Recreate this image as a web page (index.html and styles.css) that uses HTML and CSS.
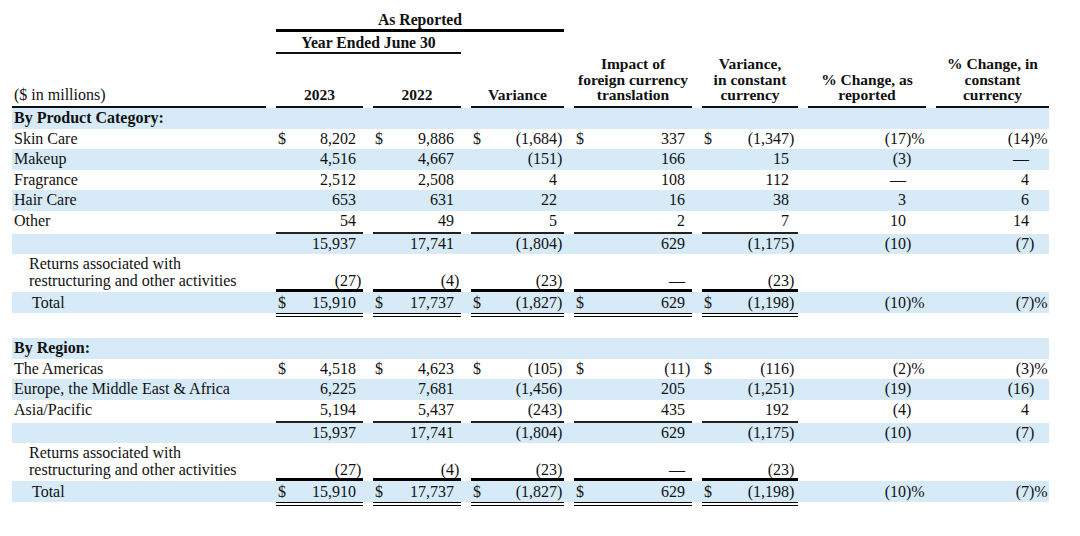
FILE: index.html
```html
<!DOCTYPE html>
<html>
<head>
<meta charset="utf-8">
<link rel="stylesheet" href="styles.css">
</head>
<body>
<div class="sheet">
  <div class="row">
    <div class="t1">As Reported</div>
  </div>
  <div class="row">
    <div class="t2">Year Ended June 30</div>
  </div>
  <div class="row heads">
    <div class="hl">($ in millions)</div>
    <div class="hd">2023</div>
    <div class="hd">2022</div>
    <div class="hd">Variance</div>
    <div class="hd">Impact of<br>foreign currency<br>translation</div>
    <div class="hd">Variance,<br>in constant<br>currency</div>
    <div class="hd">% Change, as<br>reported</div>
    <div class="hd">% Change, in<br>constant<br>currency</div>
  </div>

  <div class="row r blue cat"><div class="lab">By Product Category:</div></div>
  <div class="row r">
    <div class="lab">Skin Care</div>
    <div class="n"><span class="d">$</span>8,202</div>
    <div class="n"><span class="d">$</span>9,886</div>
    <div class="n"><span class="d">$</span>(1,684<span class="h">)</span></div>
    <div class="n"><span class="d">$</span>337</div>
    <div class="n c5"><span class="d">$</span>(1,347<span class="h">)</span></div>
    <div class="p">(17<span class="h">)%</span></div>
    <div class="p">(14<span class="h">)%</span></div>
  </div>
  <div class="row r blue">
    <div class="lab">Makeup</div>
    <div class="n">4,516</div>
    <div class="n">4,667</div>
    <div class="n">(151<span class="h">)</span></div>
    <div class="n">166</div>
    <div class="n c5">15</div>
    <div class="p">(3<span class="h">)</span></div>
    <div class="p">—</div>
  </div>
  <div class="row r">
    <div class="lab">Fragrance</div>
    <div class="n">2,512</div>
    <div class="n">2,508</div>
    <div class="n">4</div>
    <div class="n">108</div>
    <div class="n c5">112</div>
    <div class="p">—</div>
    <div class="p">4</div>
  </div>
  <div class="row r blue">
    <div class="lab">Hair Care</div>
    <div class="n">653</div>
    <div class="n">631</div>
    <div class="n">22</div>
    <div class="n">16</div>
    <div class="n c5">38</div>
    <div class="p">3</div>
    <div class="p">6</div>
  </div>
  <div class="row r">
    <div class="lab">Other</div>
    <div class="n ul">54</div>
    <div class="n ul">49</div>
    <div class="n ul">5</div>
    <div class="n ul">2</div>
    <div class="n c5 ul">7</div>
    <div class="p">10</div>
    <div class="p">14</div>
  </div>
  <div class="row r blue">
    <div class="lab"></div>
    <div class="n">15,937</div>
    <div class="n">17,741</div>
    <div class="n">(1,804<span class="h">)</span></div>
    <div class="n">629</div>
    <div class="n c5">(1,175<span class="h">)</span></div>
    <div class="p">(10<span class="h">)</span></div>
    <div class="p">(7<span class="h">)</span></div>
  </div>
  <div class="row ret">
    <div class="lab">Returns associated with<br>restructuring and other activities</div>
    <div class="n">(27<span class="h">)</span></div>
    <div class="n">(4<span class="h">)</span></div>
    <div class="n">(23<span class="h">)</span></div>
    <div class="n">—</div>
    <div class="n c5">(23<span class="h">)</span></div>
    <div></div>
    <div></div>
  </div>
  <div class="row tot">
    <div class="lab">Total</div>
    <div class="n"><span class="d">$</span>15,910</div>
    <div class="n"><span class="d">$</span>17,737</div>
    <div class="n"><span class="d">$</span>(1,827<span class="h">)</span></div>
    <div class="n"><span class="d">$</span>629</div>
    <div class="n c5"><span class="d">$</span>(1,198<span class="h">)</span></div>
    <div class="p">(10<span class="h">)%</span></div>
    <div class="p">(7<span class="h">)%</span></div>
  </div>

  <div class="row r blue cat gap"><div class="lab">By Region:</div></div>
  <div class="row r">
    <div class="lab">The Americas</div>
    <div class="n"><span class="d">$</span>4,518</div>
    <div class="n"><span class="d">$</span>4,623</div>
    <div class="n"><span class="d">$</span>(105<span class="h">)</span></div>
    <div class="n"><span class="d">$</span>(11<span class="h">)</span></div>
    <div class="n c5"><span class="d">$</span>(116<span class="h">)</span></div>
    <div class="p">(2<span class="h">)%</span></div>
    <div class="p">(3<span class="h">)%</span></div>
  </div>
  <div class="row r blue">
    <div class="lab">Europe, the Middle East &amp; Africa</div>
    <div class="n">6,225</div>
    <div class="n">7,681</div>
    <div class="n">(1,456<span class="h">)</span></div>
    <div class="n">205</div>
    <div class="n c5">(1,251<span class="h">)</span></div>
    <div class="p">(19<span class="h">)</span></div>
    <div class="p">(16<span class="h">)</span></div>
  </div>
  <div class="row r">
    <div class="lab">Asia/Pacific</div>
    <div class="n ul">5,194</div>
    <div class="n ul">5,437</div>
    <div class="n ul">(243<span class="h">)</span></div>
    <div class="n ul">435</div>
    <div class="n c5 ul">192</div>
    <div class="p">(4<span class="h">)</span></div>
    <div class="p">4</div>
  </div>
  <div class="row r blue">
    <div class="lab"></div>
    <div class="n">15,937</div>
    <div class="n">17,741</div>
    <div class="n">(1,804<span class="h">)</span></div>
    <div class="n">629</div>
    <div class="n c5">(1,175<span class="h">)</span></div>
    <div class="p">(10<span class="h">)</span></div>
    <div class="p">(7<span class="h">)</span></div>
  </div>
  <div class="row ret">
    <div class="lab">Returns associated with<br>restructuring and other activities</div>
    <div class="n">(27<span class="h">)</span></div>
    <div class="n">(4<span class="h">)</span></div>
    <div class="n">(23<span class="h">)</span></div>
    <div class="n">—</div>
    <div class="n c5">(23<span class="h">)</span></div>
    <div></div>
    <div></div>
  </div>
  <div class="row tot">
    <div class="lab">Total</div>
    <div class="n"><span class="d">$</span>15,910</div>
    <div class="n"><span class="d">$</span>17,737</div>
    <div class="n"><span class="d">$</span>(1,827<span class="h">)</span></div>
    <div class="n"><span class="d">$</span>629</div>
    <div class="n c5"><span class="d">$</span>(1,198<span class="h">)</span></div>
    <div class="p">(10<span class="h">)%</span></div>
    <div class="p">(7<span class="h">)%</span></div>
  </div>
</div>
</body>
</html>
```

FILE: styles.css
```css
* {
  box-sizing: border-box;
  margin: 0;
  padding: 0;
}

body {
  margin: 0;
  background: #ffffff;
  color: #111111;
  font-family: "Liberation Serif", "Times New Roman", serif;
  font-size: 16px;
}

.sheet {
  padding: 11px 0 0 12px;
  width: 1049px;
}

.row {
  display: grid;
  grid-template-columns: 254px 87px 88px 93px 118px 96px 118px 113px;
  column-gap: 10px;
  white-space: nowrap;
}

.t1 {
  grid-column: 2 / 5;
  font-weight: bold;
  font-size: 15.7px;
  line-height: 18px;
  text-align: center;
  border-bottom: 3px solid #000;
}

.t2 {
  grid-column: 2 / 4;
  margin-top: 2px;
  font-weight: bold;
  font-size: 15.7px;
  line-height: 18px;
  text-align: center;
  border-bottom: 2px solid #111;
}

.heads {
  margin-top: 2px;
  align-items: end;
}

.hd {
  font-weight: bold;
  font-size: 15.5px;
  line-height: 15.5px;
  text-align: center;
  padding-bottom: 3.5px;
  border-bottom: 2px solid #111;
}

.hl {
  font-size: 16px;
  line-height: 15.5px;
  padding-left: 2px;
  padding-bottom: 3.5px;
  border-bottom: 2px solid #111;
}

.r {
  line-height: 20.6px;
}

.blue {
  background: #d6eaf8;
}

.lab {
  padding-left: 2px;
}

.cat .lab {
  font-weight: bold;
}

.n {
  text-align: right;
  padding: 0 7px 0 2px;
}

.n.c5 {
  padding-right: 9px;
}

.d {
  float: left;
}

.h {
  display: inline-block;
  width: 0;
  text-align: left;
}

.p {
  text-align: right;
  padding-right: 20px;
}

.ul {
  border-bottom: 2px solid #222;
}

.ret {
  align-items: end;
  line-height: 16.5px;
}

.ret .lab {
  padding: 2px 0 3px 17px;
}

.ret .n {
  border-bottom: 3px solid #000;
}

.tot {
  line-height: 21px;
  background: linear-gradient(#d6eaf8, #d6eaf8) top / 100% calc(100% - 4px) no-repeat;
}

.tot .lab {
  padding-left: 20px;
}

.tot .n {
  border-bottom: 4px double #000;
}

.gap {
  margin-top: 21px;
}
```
